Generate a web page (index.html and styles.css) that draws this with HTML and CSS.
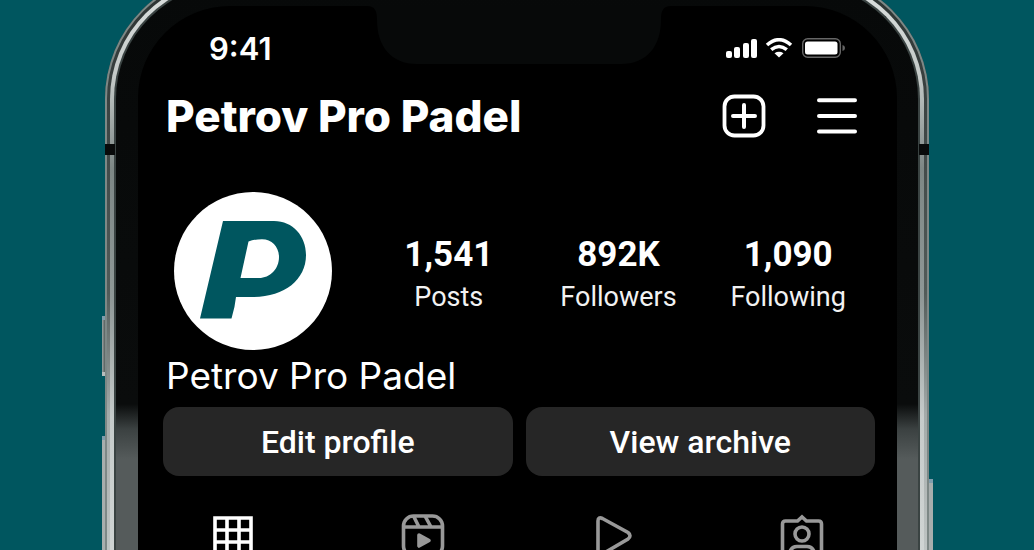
FILE: index.html
```html
<!DOCTYPE html>
<html lang="en">
<head>
    <meta charset="UTF-8">
    <meta name="viewport" content="width=device-width, initial-scale=1.0">
    <title>Petrov Pro Padel</title>
    <link rel="stylesheet" href="styles.css">
</head>
<body>

    <!-- Phone -->
    <div class="phone">
        <span class="side-key key-mute"></span>
        <span class="side-key key-volume"></span>
        <span class="side-key key-power"></span>
        <div class="frame">
            <span class="antenna antenna-left"></span>
            <span class="antenna antenna-right"></span>
            <div class="rail">
            <div class="bezel">
                <main class="screen">
                    <svg class="notch" viewBox="0 0 304 60" aria-hidden="true">
                        <path d="M0 0 C8 0 10 5 10 14 C10 40 24 58 50 58 H254 C280 58 294 40 294 14 C294 5 296 0 304 0 Z" fill="#070909"/>
                    </svg>

                    <!-- Status bar -->
                    <div class="status">
                        <span class="time">9:41</span>
                        <svg class="status-icons" width="120" height="22" viewBox="0 0 120 22" aria-hidden="true">
                            <g fill="#fff">
                                <rect x="0" y="13" width="6" height="7" rx="2"/>
                                <rect x="8" y="9" width="6" height="11" rx="2"/>
                                <rect x="17" y="5" width="6" height="15" rx="2"/>
                                <rect x="25" y="1" width="6" height="19" rx="2"/>
                                <path d="M53 19.5 L48.5 15.2 Q53 12.4 57.5 15.2 Z"/>
                            </g>
                            <path d="M41 7 Q53 -3.5 65 7 M45.2 11.7 Q53 5.3 60.8 11.7" fill="none" stroke="#fff" stroke-width="3.6"/>
                            <rect x="76.7" y="0.7" width="37.6" height="18.6" rx="5" fill="none" stroke="#666" stroke-width="1.4"/>
                            <rect x="79" y="3.5" width="32.5" height="13" rx="2.5" fill="#fff"/>
                            <path d="M116.5 7 Q119 7.5 119 10 Q119 12.5 116.5 13 Z" fill="#666"/>
                        </svg>
                    </div>

                    <!-- Header -->
                    <header class="header">
                        <h1>Petrov Pro Padel</h1>
                        <div class="actions">
                            <button type="button" aria-label="New post">
                                <svg width="44" height="44" viewBox="0 0 44 44">
                                    <rect x="2.5" y="2.5" width="39" height="39" rx="10" fill="none" stroke="#fff" stroke-width="3.8"/>
                                    <path d="M22 11 V33 M11 22 H33" stroke="#fff" stroke-width="4" stroke-linecap="round"/>
                                </svg>
                            </button>
                            <button type="button" aria-label="Menu">
                                <svg width="40" height="44" viewBox="0 0 40 44">
                                    <path d="M2 6.3 H38 M2 22 H38 M2 37.6 H38" stroke="#fff" stroke-width="4" stroke-linecap="round"/>
                                </svg>
                            </button>
                        </div>
                    </header>

                    <!-- Profile -->
                    <section class="profile">
                        <svg class="avatar" width="158" height="158" viewBox="0 0 158 158" role="img" aria-label="Petrov Pro Padel logo">
                            <circle cx="79" cy="79" r="79" fill="#fff"/>
                            <path fill="#00565f" fill-rule="evenodd" d="M49 29 H100 C119 29 132 44 132 63 C132 88 110 105 79 105 H62 Q61 115 57.5 126.5 H26 Z M74.5 49.5 Q80 47.2 88 47.2 C98 47.2 105 55 105 65 C105 77 96 86 85 86 H66.5 Z"/>
                        </svg>
                        <ul class="stats">
                            <li><strong>1,541</strong><span>Posts</span></li>
                            <li><strong>892K</strong><span>Followers</span></li>
                            <li><strong>1,090</strong><span>Following</span></li>
                        </ul>
                    </section>
                    <p class="name">Petrov Pro Padel</p>

                    <div class="buttons">
                        <button type="button">Edit profile</button>
                        <button type="button">View archive</button>
                    </div>

                    <!-- Tabs -->
                    <nav class="tabs">
                        <a href="#grid" class="active" aria-label="Grid">
                            <svg width="44" height="44" viewBox="0 0 44 44" fill="none" stroke="currentColor" stroke-width="3.6">
                                <path d="M4 4 H40 V40 H4 Z M16 4 V40 M28 4 V40 M4 16 H40 M4 28 H40"/>
                            </svg>
                        </a>
                        <a href="#reels" aria-label="Reels">
                            <svg width="44" height="44" viewBox="0 0 44 44" fill="none" stroke="currentColor" stroke-width="3.6">
                                <rect x="2.5" y="2" width="39" height="40" rx="10"/>
                                <path d="M2.5 13 H41.5 M12.5 2 L18 13 M24 2 L30 13"/>
                                <path d="M18 21 L28 26.5 L18 32 Z" fill="currentColor" stroke-linejoin="round"/>
                            </svg>
                        </a>
                        <a href="#videos" aria-label="Videos">
                            <svg width="44" height="44" viewBox="0 0 44 44" fill="none" stroke="currentColor" stroke-width="3.6">
                                <path d="M8 7 Q8 2.5 12.5 4.5 L38 18.5 Q42 21.5 38 25 L12.5 40 Q8 42 8 37 Z"/>
                            </svg>
                        </a>
                        <a href="#tagged" aria-label="Tagged">
                            <svg width="44" height="44" viewBox="0 0 44 44" fill="none" stroke="currentColor" stroke-width="3.6">
                                <path d="M5.5 7 H17.5 L22 3 L26.5 7 H38.5 Q41.5 7 41.5 10 V39 Q41.5 42 38.5 42 H5.5 Q2.5 42 2.5 39 V10 Q2.5 7 5.5 7 Z"/>
                                <circle cx="22" cy="20" r="7"/>
                                <path d="M9 42 Q10 32.5 17 32.5 H27 Q34 32.5 35 42"/>
                            </svg>
                        </a>
                    </nav>
                </main>
            </div>
            </div>
        </div>
    </div>

</body>
</html>
```
FILE: styles.css
```css
* {
    box-sizing: border-box;
}

body {
    margin: 0;
    height: 100vh;
    overflow: hidden;
    background-color: #00565f;
    color: #fff;
    font-family: Roboto, sans-serif;
}

button {
    padding: 0;
    border: none;
    background: none;
    color: inherit;
    font-family: inherit;
    cursor: pointer;
}

svg {
    display: block;
}

/* Phone body */
.phone {
    position: relative;
    width: 80%;
    max-width: 824px;
    margin: -27px auto 0;
}

.frame {
    position: relative;
    padding: 5px;
    border-radius: 126px 126px 0 0;
    background: linear-gradient(to bottom, #2b3231 0, #3f4746 160px, #525b59 320px, #a3aaa9 440px, #bfc5c4 580px);
    box-shadow: inset 0 0 0 2px #7d8886;
}

.rail {
    padding: 4px;
    border-radius: 121px 121px 0 0;
    background: linear-gradient(to bottom, #dde1e0 0, #c3c9c7 100px, #7d8785 190px, #8f9897 320px, #c6cbca 440px, #d0d5d4 580px);
}

.bezel {
    padding: 22px 21px 22px 22px;
    border: 2px solid #3a4342;
    border-bottom: none;
    border-radius: 117px 117px 0 0;
    background: linear-gradient(to bottom, #070909 0, #0a0c0c 420px, #3b4141 445px, #555b5b 475px, #555b5b 100%);
}

.screen {
    position: relative;
    padding-bottom: 40px;
    border-radius: 92px 92px 0 0;
    background-color: #000;
}

.notch {
    position: absolute;
    top: 0;
    left: 50%;
    width: 304px;
    margin-left: -151px;
}

.antenna {
    position: absolute;
    top: 171px;
    width: 10px;
    height: 11px;
    background-color: #080a0a;
}

.antenna-left {
    left: 0;
}

.antenna-right {
    right: 0;
}

.side-key {
    position: absolute;
    width: 4px;
    border-top: 4px solid #7f9dac;
    background: linear-gradient(to right, #9ba4a3, #3d4645);
}

.key-mute {
    left: -3px;
    top: 343px;
    height: 60px;
    border-bottom: 4px solid #b7bebd;
}

.key-volume {
    left: -3px;
    top: 463px;
    height: 140px;
    background: #a7aead;
}

.key-power {
    right: -4px;
    top: 506px;
    height: 100px;
    background: #a7aead;
}

/* Status bar */
.status {
    display: flex;
    justify-content: space-between;
    align-items: center;
    padding: 22px 51px 0 71px;
}

.time {
    font-family: Inter, sans-serif;
    font-size: 31px;
    font-weight: 600;
    line-height: 42px;
}

/* Header */
.header {
    display: flex;
    justify-content: space-between;
    align-items: center;
    padding: 18px 40px 0 28px;
}

.header h1 {
    margin: 0;
    font-family: Inter, sans-serif;
    font-size: 44px;
    font-weight: 800;
    line-height: 56px;
}

.actions {
    display: flex;
    gap: 51px;
}

/* Profile */
.profile {
    display: flex;
    align-items: center;
    gap: 32px;
    padding: 48px 24px 0 36px;
}

.avatar {
    flex-shrink: 0;
}

.stats {
    display: grid;
    grid-template-columns: repeat(3, 1fr);
    flex: 1;
    margin: 0;
    padding: 8px 0 0;
    list-style: none;
    text-align: center;
}

.stats strong,
.stats span {
    display: block;
}

.stats strong {
    font-size: 35px;
    font-weight: 700;
    line-height: 44px;
}

.stats span {
    color: #f2f2f2;
    font-size: 27px;
    line-height: 40px;
}

.name {
    margin: 0;
    padding: 2px 28px 0;
    font-family: Inter, sans-serif;
    font-size: 37px;
    font-weight: 400;
    line-height: 48px;
}

.buttons {
    display: grid;
    grid-template-columns: 1fr 1fr;
    gap: 13px;
    padding: 7px 22px 0 25px;
}

.buttons button {
    height: 69px;
    border-radius: 16px;
    background-color: #262626;
    font-size: 32px;
    font-weight: 500;
}

/* Tabs */
.tabs {
    display: grid;
    grid-template-columns: repeat(4, 1fr);
    justify-items: center;
    padding-top: 38px;
}

.tabs a {
    color: #999;
}

.tabs .active {
    color: #fff;
}
```
